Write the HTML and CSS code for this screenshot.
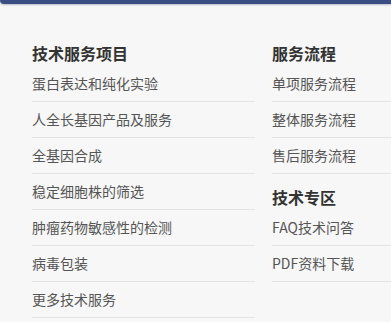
FILE: index.html
```html
<!DOCTYPE html>
<html>
<head>
  <meta charset="utf-8">
  <title>技术服务</title>
  <link rel="stylesheet" href="styles.css">
</head>
<body>
  <div class="top-bar"></div>

  <div class="footer-nav">
    <div class="nav-col">
      <h3>技术服务项目</h3>
      <ul>
        <li><a href="#">蛋白表达和纯化实验</a></li>
        <li><a href="#">人全长基因产品及服务</a></li>
        <li><a href="#">全基因合成</a></li>
        <li><a href="#">稳定细胞株的筛选</a></li>
        <li><a href="#">肿瘤药物敏感性的检测</a></li>
        <li><a href="#">病毒包装</a></li>
        <li><a href="#">更多技术服务</a></li>
      </ul>
    </div>

    <div class="nav-col nav-col-last">
      <h3>服务流程</h3>
      <ul>
        <li><a href="#">单项服务流程</a></li>
        <li><a href="#">整体服务流程</a></li>
        <li><a href="#">售后服务流程</a></li>
      </ul>
      <h3>技术专区</h3>
      <ul>
        <li><a href="#">FAQ技术问答</a></li>
        <li><a href="#">PDF资料下载</a></li>
      </ul>
    </div>
  </div>
</body>
</html>
```

FILE: styles.css
```css
body {
  margin: 0;
  padding: 0;
  background-color: #f7f7f7;
  font-family: "Noto Sans CJK SC", "Liberation Sans", sans-serif;
}

.top-bar {
  height: 4px;
  background-color: #3b4e84;
  border-bottom-left-radius: 4px;
  box-shadow: 0 1px 2px rgba(40, 50, 90, 0.3);
}

.footer-nav {
  display: flex;
  gap: 17px;
  padding: 26px 0 0 32px;
}

.nav-col {
  flex: 0 0 223px;
}

.nav-col-last {
  flex: 1;
}

.nav-col h3 {
  margin: 0;
  padding-top: 10px;
  font-size: 16px;
  line-height: 26px;
  font-weight: bold;
  color: #333;
}

.nav-col ul {
  list-style: none;
  margin: 0;
  padding: 0;
}

.nav-col li {
  line-height: 35px;
  border-bottom: 1px solid #e4e4e4;
  font-size: 14px;
  white-space: nowrap;
}

.nav-col li a {
  color: #555;
  text-decoration: none;
}
```
